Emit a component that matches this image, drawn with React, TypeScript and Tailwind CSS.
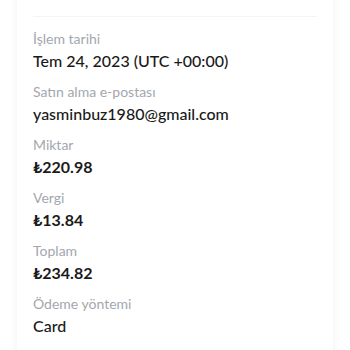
const rows: Array<{ label: string; value: string; bold?: boolean }> = [
  { label: 'İşlem tarihi', value: 'Tem 24, 2023 (UTC +00:00)' },
  { label: 'Satın alma e-postası', value: 'yasminbuz1980@gmail.com' },
  { label: 'Miktar', value: '₺220.98', bold: true },
  { label: 'Vergi', value: '₺13.84', bold: true },
  { label: 'Toplam', value: '₺234.82', bold: true },
  { label: 'Ödeme yöntemi', value: 'Card' },
];

export default function App() {
  return (
    <div className="w-[350px] h-[350px] overflow-hidden bg-white" style={{ fontFamily: 'Lato, "Noto Sans", sans-serif' }}>
      <div className="mx-[17px] -mt-[14px] bg-white shadow-[0_0_8px_rgba(0,0,0,0.06)] px-4 pb-6">
        <div className="h-[17px] flex items-center justify-center text-[12px] text-gray-300">0.000</div>
        <div className="border-b border-gray-100 h-[14px]" />
        <div className="flex flex-col pt-[13px]">
          {rows.map((r, i) => (
            <div key={i} className="mb-[11px]">
              <div className="text-[14px] leading-[18px] text-[#a3a7ad]">{r.label}</div>
              <div className={`mt-[2px] text-[16px] leading-[22px] text-[#1a1a1a] ${r.bold ? 'font-bold' : 'font-medium'}`}>{r.value}</div>
            </div>
          ))}
        </div>
      </div>
    </div>
  );
}
